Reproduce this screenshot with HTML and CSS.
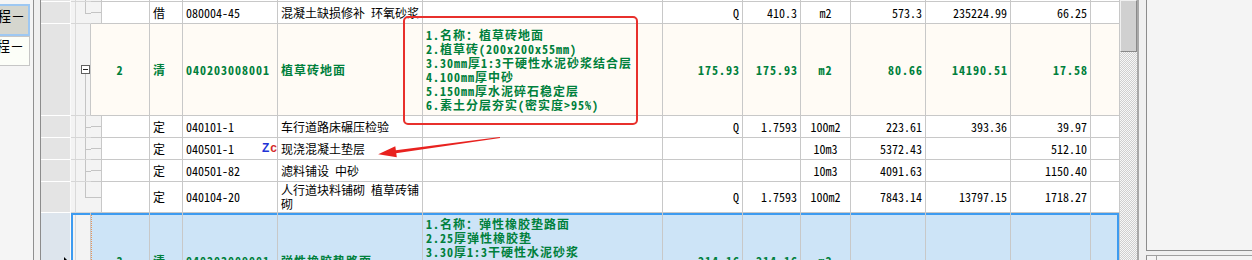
FILE: index.html
```html
<!DOCTYPE html>
<html lang="zh-CN">
  <head>
    <meta charset="UTF-8" />
    <title>分部分项工程</title>
    <link rel="stylesheet" href="styles.css">
  </head>
  <body>
    <div class="app">
      <!-- Левая панель: вкладки -->
      <aside class="tabs">
        <div class="tab tab-active">程－</div>
        <div class="tab">程－</div>
      </aside>
      <div class="splitter"></div>

      <!-- Таблица -->
      <div class="grid-wrap">
        <table class="grid">
          <colgroup>
            <col class="w-rh"><col class="w-tree"><col class="w-no"><col class="w-type">
            <col class="w-code"><col class="w-name"><col class="w-feat"><col class="w-expr">
            <col class="w-qty"><col class="w-unit"><col class="w-price"><col class="w-total">
            <col class="w-cost"><col class="w-rest">
          </colgroup>
          <tbody>
            <tr class="h22">
              <td class="rh"></td><td class="tree branch"></td><td class="no indent"></td>
              <td></td><td></td><td></td><td></td><td></td><td></td><td></td><td></td><td></td><td></td><td></td>
            </tr>
            <tr class="h22">
              <td class="rh"></td><td class="tree branch last"></td><td class="no indent"></td>
              <td>借</td>
              <td>080004-45</td>
              <td>混凝土缺损修补 环氧砂浆</td>
              <td></td>
              <td class="num">Q</td>
              <td class="num">410.3</td>
              <td class="unit">m2</td>
              <td class="num">573.3</td>
              <td class="num">235224.99</td>
              <td class="num">66.25</td>
              <td></td>
            </tr>
            <tr class="bill">
              <td class="rh"></td>
              <td class="tree parent"><span class="toggle"></span></td>
              <td class="no">2</td>
              <td>清</td>
              <td>040203008001</td>
              <td>植草砖地面</td>
              <td class="feat">1.名称：植草砖地面<br>2.植草砖(200x200x55mm)<br>3.30mm厚1:3干硬性水泥砂浆结合层<br>4.100mm厚中砂<br>5.150mm厚水泥碎石稳定层<br>6.素土分层夯实(密实度&gt;95%)</td>
              <td class="num">175.93</td>
              <td class="num">175.93</td>
              <td class="unit">m2</td>
              <td class="num">80.66</td>
              <td class="num">14190.51</td>
              <td class="num">17.58</td>
              <td></td>
            </tr>
            <tr class="h22">
              <td class="rh"></td><td class="tree branch"></td><td class="no indent"></td>
              <td>定</td>
              <td>040101-1</td>
              <td>车行道路床碾压检验</td>
              <td></td>
              <td class="num">Q</td>
              <td class="num">1.7593</td>
              <td class="unit">100m2</td>
              <td class="num">223.61</td>
              <td class="num">393.36</td>
              <td class="num">39.97</td>
              <td></td>
            </tr>
            <tr class="h22">
              <td class="rh"></td><td class="tree branch"></td><td class="no indent"></td>
              <td>定</td>
              <td><div class="code-line"><span>040501-1</span><span class="zc">Z<b>c</b></span></div></td>
              <td>现浇混凝土垫层</td>
              <td></td>
              <td class="num"></td>
              <td class="num"></td>
              <td class="unit">10m3</td>
              <td class="num">5372.43</td>
              <td class="num"></td>
              <td class="num">512.10</td>
              <td></td>
            </tr>
            <tr class="h22">
              <td class="rh"></td><td class="tree branch"></td><td class="no indent"></td>
              <td>定</td>
              <td>040501-82</td>
              <td>滤料铺设 中砂</td>
              <td></td>
              <td class="num"></td>
              <td class="num"></td>
              <td class="unit">10m3</td>
              <td class="num">4091.63</td>
              <td class="num"></td>
              <td class="num">1150.40</td>
              <td></td>
            </tr>
            <tr class="h31">
              <td class="rh"></td><td class="tree branch last"></td><td class="no indent"></td>
              <td>定</td>
              <td>040104-20</td>
              <td class="wrap">人行道块料铺砌 植草砖铺砌</td>
              <td></td>
              <td class="num">Q</td>
              <td class="num">1.7593</td>
              <td class="unit">100m2</td>
              <td class="num">7843.14</td>
              <td class="num">13797.15</td>
              <td class="num">1718.27</td>
              <td></td>
            </tr>
            <tr class="bill sel">
              <td class="rh"><span class="cursor"></span></td>
              <td class="tree"></td>
              <td class="no focus">3</td>
              <td>清</td>
              <td>040203009001</td>
              <td>弹性橡胶垫路面</td>
              <td class="feat">1.名称：弹性橡胶垫路面<br>2.25厚弹性橡胶垫<br>3.30厚1:3干硬性水泥砂浆</td>
              <td class="num">214.16</td>
              <td class="num">214.16</td>
              <td class="unit">m2</td>
              <td class="num"></td>
              <td class="num"></td>
              <td class="num"></td>
              <td></td>
            </tr>
          </tbody>
        </table>
      </div>

      <div class="vscroll"><div class="thumb"></div></div>
      <div class="gap"></div>
      <div class="side">
        <div class="side-top"></div>
        <div class="side-bottom"></div>
      </div>

      <!-- Пометки поверх таблицы -->
      <div class="note"></div>
      <svg class="arrow" width="1252" height="260" viewBox="0 0 1252 260">
        <polygon points="499.9,136.9 500.1,138.1 394.2,153.6 393.8,150.4" fill="#e8221f" />
        <polygon points="378.2,154.2 395.3,146.3 396.8,157.2" fill="#e8221f" />
      </svg>
    </div>
  </body>
</html>
```

FILE: styles.css
```css
:root {
  --line: #c8c8c8;
  --tree-line: #c4c4c4;
  --green: #00803c;
  --cream: #fffbf5;
  --sel: #cde4f7;
  --sel-border: #3d9bf0;
}

* {
  box-sizing: border-box;
}

body {
  margin: 0;
  font-family: "Noto Sans Mono CJK SC", "Noto Sans CJK SC", sans-serif;
  font-size: 12px;
  color: #000;
  background: #f5f5f5;
}

.app {
  position: relative;
  display: flex;
  height: 260px;
  overflow: hidden;
}

/* Вкладки слева */
.tabs {
  width: 33px;
  flex: none;
  padding-top: 4px;
  background: #f5f5f5;
  overflow: hidden;
}

.tab {
  width: 33px;
  height: 30px;
  margin-left: -3px;
  border: 1px solid #c6c6c6;
  background: #fcfef8;
  font-size: 14px;
  line-height: 16px;
  text-indent: -2px;
  white-space: nowrap;
}

.tab-active {
  height: 32px;
  border: 2px solid #9ec8f2;
  background: #d5d6ce;
  padding-top: 1px;
}

.splitter {
  width: 8px;
  flex: none;
  background: #f0f0f0;
  border-left: 1px solid #909090;
  border-right: 1px solid #8c8c8c;
}

/* Таблица */
.grid-wrap {
  width: 1079px;
  flex: none;
  overflow: hidden;
  background: #fff;
}

.grid {
  width: 1079px;
  table-layout: fixed;
  border-collapse: separate;
  border-spacing: 0;
  margin-top: -20px;
}

.w-rh { width: 30px; }
.w-tree { width: 20px; }
.w-no { width: 59px; }
.w-type { width: 33px; }
.w-code { width: 95px; }
.w-name { width: 145px; }
.w-feat { width: 240px; }
.w-expr { width: 80px; }
.w-qty { width: 58px; }
.w-unit { width: 50px; }
.w-price { width: 75px; }
.w-total { width: 85px; }
.w-cost { width: 80px; }
.w-rest { width: 29px; }

.grid td {
  border-right: 1px solid var(--line);
  border-bottom: 1px solid var(--line);
  padding: 0 3px;
  white-space: nowrap;
  overflow: hidden;
  vertical-align: middle;
  line-height: 14px;
}

.h22 { height: 22px; }
.h31 { height: 31px; }
.bill { height: 92px; }
.bill.sel { height: 96px; }

.grid td.rh {
  background: #e4e4e4;
  border-right-color: #fafafa;
  border-bottom-color: #fff;
  padding: 0 1px 0 0;
  text-align: right;
}

.grid td.tree {
  position: relative;
  padding: 0;
  background: linear-gradient(to right, transparent 4px, #d9d9d9 4px, #d9d9d9 5px, transparent 5px), #f3f3f3;
  border-bottom-color: #d6d6d6;
}

.grid td.tree.branch {
  border-right: none;
}

.tree.branch::before {
  content: "";
  position: absolute;
  left: 14px;
  top: 0;
  bottom: 0;
  border-left: 1px solid var(--tree-line);
}

.tree.branch.last::before {
  bottom: 50%;
}

.tree.branch::after {
  content: "";
  position: absolute;
  left: 14px;
  right: 0;
  top: 50%;
  border-top: 1px solid var(--tree-line);
}

.tree.parent::before {
  content: "";
  position: absolute;
  left: 14px;
  top: 50%;
  bottom: 0;
  border-left: 1px solid var(--tree-line);
}

.toggle {
  position: absolute;
  left: 10px;
  top: calc(50% - 5px);
  width: 9px;
  height: 9px;
  border: 1px solid #606060;
  background: #fff;
  z-index: 1;
}

.toggle::after {
  content: "";
  position: absolute;
  left: 1px;
  right: 1px;
  top: 3px;
  border-top: 1px solid #202020;
}

.grid td.no {
  text-align: center;
}

.grid td.no.indent {
  border-left: none;
  background:
    linear-gradient(var(--tree-line), var(--tree-line)) 0 50% / 10px 1px no-repeat,
    linear-gradient(to right, #f3f3f3 10px, var(--line) 10px, var(--line) 11px, #fff 11px);
}

.grid td.num {
  text-align: right;
}

.grid td.unit {
  text-align: center;
}

.grid td.wrap {
  white-space: normal;
  word-break: break-all;
}

.code-line {
  display: flex;
  align-items: center;
  justify-content: space-between;
  margin-right: -3px;
}

.zc {
  font-family: "Liberation Sans", sans-serif;
  font-weight: bold;
  font-size: 12px;
  color: #2233d6;
  margin-top: -2px;
}

.zc b {
  color: #d42a2a;
  margin-left: 1px;
}

/* Строка раздела (清) */
.bill td {
  background: var(--cream);
  color: var(--green);
  font-weight: bold;
  letter-spacing: 1px;
}

.grid .bill td.num {
  padding-right: 2px;
}

.grid .sel td.feat {
  vertical-align: top;
  padding-top: 4px;
}

/* Выделенная строка */
.sel td {
  background: var(--sel);
  box-shadow: inset 0 2px var(--sel-border);
}

.grid .sel td.rh {
  background: #dde5ed;
  box-shadow: none;
}

.grid .sel td.tree {
  box-shadow: inset 2px 2px var(--sel-border);
  border-right-color: var(--line);
}

.sel td:last-child {
  box-shadow: inset -2px 2px var(--sel-border);
}

.sel td.focus {
  position: relative;
}

.sel td.focus::after {
  content: "";
  position: absolute;
  top: 2px;
  bottom: 0;
  left: 0;
  right: -1px;
  border-left: 1px dotted #e8945a;
  border-right: 1px dotted #e8945a;
}

.cursor {
  display: inline-block;
  width: 0;
  height: 0;
  border-left: 5px solid #000;
  border-top: 5px solid transparent;
  border-bottom: 5px solid transparent;
  vertical-align: middle;
}

/* Полоса прокрутки и правая панель */
.vscroll {
  width: 17px;
  flex: none;
  background: repeating-conic-gradient(#cfcfcf 0 25%, #f7f7f7 0 50%) 0 0 / 2px 2px;
}

.thumb {
  height: 52px;
  background: #d0d0d0;
  border: 1px solid;
  border-color: #f0f0f0 #8a8a8a #8a8a8a #f0f0f0;
}

.gap {
  width: 9px;
  flex: none;
  background: #f0f0f0;
  border-left: 2px solid #a8a8a8;
}

.side {
  flex: 1;
  background: #f0f0f0;
}

.side-top {
  height: 251px;
  background: #f4f4f4;
  border-left: 1px solid #8c8c8c;
  border-bottom: 1px solid #8c8c8c;
}

.side-bottom {
  height: 20px;
  margin-top: 4px;
  border-left: 1px solid #8c8c8c;
  border-top: 1px solid #a0a0a0;
  background: linear-gradient(to right, #f4f4f4 9px, #a0a0a0 9px, #a0a0a0 10px, #f4f4f4 10px);
}

/* Пометки */
.note {
  position: absolute;
  left: 403px;
  top: 16px;
  width: 235px;
  height: 109px;
  border: 2px solid #e8302c;
  border-radius: 5px;
}

.arrow {
  position: absolute;
  left: 0;
  top: 0;
  pointer-events: none;
}
```
